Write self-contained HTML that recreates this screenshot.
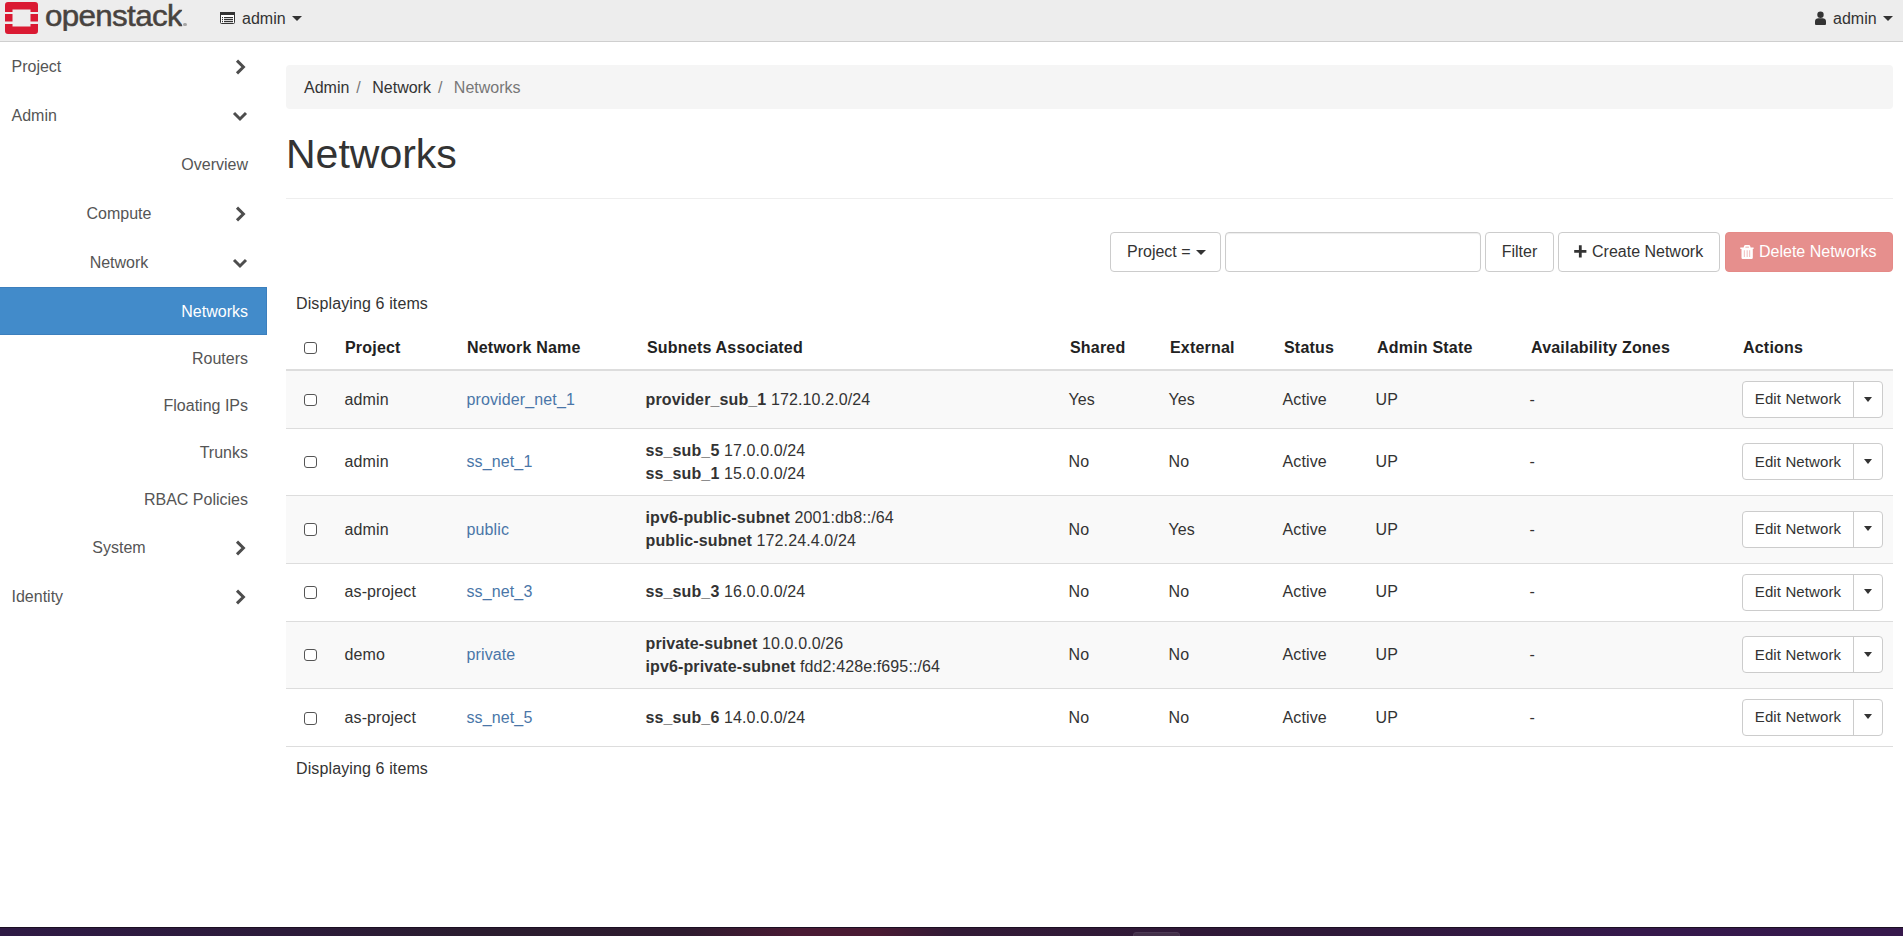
<!DOCTYPE html>
<html><head><meta charset="utf-8">
<style>
*{box-sizing:border-box;margin:0;padding:0}
html,body{width:1903px;height:936px;overflow:hidden;background:#fff}
body{font-family:"Liberation Sans",sans-serif;font-size:16px;color:#333;position:relative}
.abs{position:absolute}
/* navbar */
#nav{position:absolute;left:0;top:0;width:1903px;height:42px;background:#ededed;border-bottom:1px solid #cfcfcf}
#logo{position:absolute;left:5px;top:2px;width:33px;height:32px}
#wordmark{position:absolute;left:45px;top:0;height:31px;overflow:hidden;font-size:29px;font-weight:normal;-webkit-text-stroke:0.5px #48433f;color:#48433f;letter-spacing:-0.6px;line-height:42px;transform:scaleX(1.08);transform-origin:0 0}
#wordmark span{position:relative;top:-4.8px}
.navtxt{position:absolute;top:8px;line-height:22px;font-size:16px;color:#333}
.caret{position:absolute;width:0;height:0;border-left:5px solid transparent;border-right:5px solid transparent;border-top:5px solid #333}
/* sidebar */
.si{position:absolute;left:0;width:267px;height:48px;line-height:48px;color:#555;font-size:16px;white-space:nowrap}
.si.l1{padding-left:11.5px}
.si.r{text-align:right;padding-right:19px}
.si.c{text-align:center;padding-right:29px}
.si.active{background:#428bca;color:#fff;line-height:48px;border:1px solid #3c7fbd;border-left:none;padding-right:18px}
.chev{position:absolute}
/* breadcrumb */
#bc{position:absolute;left:286px;top:65px;width:1607px;height:44px;background:#f5f5f5;border-radius:4px;padding:1px 18px 0;line-height:44px;font-size:16px;color:#333;white-space:nowrap}
#bc .sep{color:#777;padding:0 7px}
#bc .cur{color:#777}
#h1{position:absolute;left:286px;top:129px;font-size:41px;line-height:50px;color:#333;font-weight:normal}
#hr{position:absolute;left:286px;top:198px;width:1607px;height:1px;background:#eee}
.btn{position:absolute;top:232px;height:40px;border:1px solid #ccc;border-radius:4px;background:#fff;color:#333;line-height:38px;font-size:16px;white-space:nowrap;text-align:center}
.disp{position:absolute;left:296px;font-size:16px;color:#333;line-height:22px;letter-spacing:0.12px}
/* table */
table{position:absolute;left:286px;top:326px;width:1607px;border-collapse:collapse;table-layout:fixed}
th{font-weight:bold;text-align:left;height:44px;letter-spacing:0.2px;color:#222;vertical-align:middle;border-bottom:2px solid #ddd;padding:2px 0 0 10px;line-height:22.86px}
td{vertical-align:middle;border-top:1px solid #ddd;padding:11px 0 9px 8.5px;letter-spacing:0.12px;line-height:22.86px;white-space:nowrap}
tr.odd td{background:#f9f9f9}
tbody td:nth-child(2),tbody td:nth-child(3){padding-left:9.5px}
tbody .cb{margin-left:9.5px}
tr.r4 td{padding-top:10px;padding-bottom:10px}
tr.r4 .cb,tr.r6 .cb{top:0}
tr.r4 .eb{top:0}
tr.r2 .eb .t,tr.r5 .eb .t{line-height:35px}
a{color:#4a76a8;text-decoration:none}
.cb{display:inline-block;width:12.5px;height:12.5px;border:1px solid #555;border-radius:3px;background:#fff;vertical-align:middle;margin-left:8px;position:relative;top:-1px}
.sub b{font-weight:bold}
.eb{display:inline-block;position:relative;top:-1px;left:0.5px;width:141px;height:37px;border:1px solid #ccc;border-radius:4px;background:#fff;vertical-align:middle}
.eb .t{position:absolute;left:0;top:0;width:111px;height:35px;line-height:33px;text-align:center;font-size:15px;color:#333;border-right:1px solid #ccc}
.eb .caret{left:121px;top:14.5px;border-left-width:4px;border-right-width:4px;border-top-width:5px}
#taskbar{position:absolute;left:0;top:927px;width:1903px;height:9px;background:linear-gradient(90deg,#2f1a45 0%,#2c1b3a 15%,#2a1c2f 25%,#2e1b2f 36%,#4a1a34 42%,#4a1a33 46%,#321a36 50%,#2f1939 70%,#35184b 86%,#36184c 100%);border-top:1px solid #1b0f22}
</style></head>
<body>
<div id="nav">
  <svg id="logo" viewBox="0 0 33 32">
    <path fill="#da1a32" d="M3 0H30A3 3 0 0 1 33 3V10H25.5V7.5H7.5V10H0V3A3 3 0 0 1 3 0Z"/>
    <path fill="#da1a32" d="M0 12H7.5V19.5H0ZM25.5 12H33V19.5H25.5Z"/>
    <path fill="#da1a32" d="M0 22H7.5V24.5H25.5V22H33V29A3 3 0 0 1 30 32H3A3 3 0 0 1 0 29Z"/>
  </svg>
  <div class="abs" style="left:183px;top:22.5px;width:3.6px;height:3.6px;border-radius:50%;background:#a5a5a5"></div><div id="wordmark"><span>openstack</span></div>
  <svg class="abs" style="left:220px;top:12px" width="15" height="12" viewBox="0 0 15 12">
    <rect x="0.5" y="0.5" width="14" height="11" rx="1" fill="#fff" stroke="#333"/>
    <rect x="0" y="0" width="15" height="3" fill="#333"/>
    <rect x="4" y="5" width="9" height="1.2" fill="#333"/><rect x="4" y="7" width="9" height="1.2" fill="#333"/><rect x="4" y="9" width="9" height="1.2" fill="#333"/>
    <rect x="2" y="5" width="1" height="1.2" fill="#333"/><rect x="2" y="7" width="1" height="1.2" fill="#333"/><rect x="2" y="9" width="1" height="1.2" fill="#333"/>
  </svg>
  <div class="navtxt" style="left:242px">admin</div>
  <div class="caret" style="left:292px;top:16px"></div>
  <svg class="abs" style="left:1815px;top:11px" width="11" height="14" viewBox="0 0 11 14">
    <circle cx="5.5" cy="3.8" r="3.2" fill="#333"/>
    <path d="M0 13V10.5C0 8.5 1.5 7.3 3.5 7.3H7.5C9.5 7.3 11 8.5 11 10.5V13A1 1 0 0 1 10 14H1A1 1 0 0 1 0 13Z" fill="#333"/>
  </svg>
  <div class="navtxt" style="left:1833px">admin</div>
  <div class="caret" style="left:1883px;top:16px"></div>
</div>

<!-- sidebar -->
<div class="si l1" style="top:42.5px">Project</div>
<div class="si l1" style="top:91.5px">Admin</div>
<div class="si r" style="top:140.5px">Overview</div>
<div class="si c" style="top:189.5px">Compute</div>
<div class="si c" style="top:238.5px">Network</div>
<div class="si r active" style="top:287px">Networks</div>
<div class="si r" style="top:334.5px">Routers</div>
<div class="si r" style="top:381.5px">Floating IPs</div>
<div class="si r" style="top:428.5px">Trunks</div>
<div class="si r" style="top:475.5px">RBAC Policies</div>
<div class="si c" style="top:523.5px">System</div>
<div class="si l1" style="top:572.5px">Identity</div>
<svg class="chev" style="left:233px;top:59px" width="14" height="16" viewBox="0 0 14 16"><path d="M4 1.6L10.4 8L4 14.4" fill="none" stroke="#4d4d4d" stroke-width="3"/></svg>
<svg class="chev" style="left:231.5px;top:108.5px" width="16" height="14" viewBox="0 0 16 14"><path d="M2 4L8 10L14 4" fill="none" stroke="#4d4d4d" stroke-width="3"/></svg>
<svg class="chev" style="left:233px;top:206px" width="14" height="16" viewBox="0 0 14 16"><path d="M4 1.6L10.4 8L4 14.4" fill="none" stroke="#4d4d4d" stroke-width="3"/></svg>
<svg class="chev" style="left:231.5px;top:255.5px" width="16" height="14" viewBox="0 0 16 14"><path d="M2 4L8 10L14 4" fill="none" stroke="#4d4d4d" stroke-width="3"/></svg>
<svg class="chev" style="left:233px;top:540px" width="14" height="16" viewBox="0 0 14 16"><path d="M4 1.6L10.4 8L4 14.4" fill="none" stroke="#4d4d4d" stroke-width="3"/></svg>
<svg class="chev" style="left:233px;top:589px" width="14" height="16" viewBox="0 0 14 16"><path d="M4 1.6L10.4 8L4 14.4" fill="none" stroke="#4d4d4d" stroke-width="3"/></svg>

<div id="bc">Admin<span class="sep">/&nbsp;</span>Network<span class="sep">/&nbsp;</span><span class="cur">Networks</span></div>
<h1 id="h1">Networks</h1>
<div id="hr"></div>

<div class="btn" style="left:1110px;width:111px;padding-left:16px;text-align:left">Project =<span class="caret" style="left:85px;top:17px"></span></div>
<div class="btn" style="left:1225px;width:256px;box-shadow:inset 0 1px 1px rgba(0,0,0,.075)"></div>
<div class="btn" style="left:1485px;width:69px">Filter</div>
<div class="btn" style="left:1558px;width:162px"><svg style="position:absolute;left:15px;top:12px" width="13" height="13" viewBox="0 0 13 13"><path fill="#333" d="M4.9 0.3H7.7V5H12.4V7.8H7.7V12.6H4.9V7.8H0.2V5H4.9Z"/></svg><span style="position:absolute;left:33px;top:0">Create Network</span></div>
<div class="btn" style="left:1725px;width:168px;background:#e68f8d;border-color:#e58a87;color:#fff"><svg style="position:absolute;left:14px;top:10.5px" width="14" height="16" viewBox="0 0 14 16"><path fill="#fff" fill-rule="evenodd" d="M3.6 3.6L4 2.2Q4.3 1 5.5 1H8.8Q10 1 10.3 2.2L10.6 3.6H13.6V5H0.3V3.6ZM5.3 3.6H9L8.8 2.7H5.5Z"/><path fill="#fff" d="M1.5 5H12.8V13.8Q12.8 15 11.6 15H2.7Q1.5 15 1.5 13.8ZM3.9 6.2V13H4.5V6.2ZM6.8 6.2V13H7.4V6.2ZM9.5 6.2V13H10.1V6.2Z" fill-rule="evenodd"/></svg><span style="position:absolute;left:33px;top:0">Delete Networks</span></div>

<div class="disp" style="top:293px">Displaying 6 items</div>

<table>
<colgroup><col style="width:49px"><col style="width:122px"><col style="width:180px"><col style="width:423px"><col style="width:100px"><col style="width:114px"><col style="width:93px"><col style="width:154px"><col style="width:212px"><col style="width:160px"></colgroup>
<thead><tr><th><span class="cb"></span></th><th>Project</th><th>Network Name</th><th>Subnets Associated</th><th>Shared</th><th>External</th><th>Status</th><th>Admin State</th><th>Availability Zones</th><th>Actions</th></tr></thead>
<tbody>
<tr class="odd"><td><span class="cb"></span></td><td>admin</td><td><a>provider_net_1</a></td><td><b>provider_sub_1</b> 172.10.2.0/24</td><td>Yes</td><td>Yes</td><td>Active</td><td>UP</td><td>-</td><td><span class="eb"><span class="t">Edit Network</span><span class="caret"></span></span></td></tr>
<tr class="r2"><td><span class="cb"></span></td><td>admin</td><td><a>ss_net_1</a></td><td><b>ss_sub_5</b> 17.0.0.0/24<br><b>ss_sub_1</b> 15.0.0.0/24</td><td>No</td><td>No</td><td>Active</td><td>UP</td><td>-</td><td><span class="eb"><span class="t">Edit Network</span><span class="caret"></span></span></td></tr>
<tr class="odd" style="height:68px"><td><span class="cb"></span></td><td>admin</td><td><a>public</a></td><td><b>ipv6-public-subnet</b> 2001:db8::/64<br><b>public-subnet</b> 172.24.4.0/24</td><td>No</td><td>Yes</td><td>Active</td><td>UP</td><td>-</td><td><span class="eb"><span class="t">Edit Network</span><span class="caret"></span></span></td></tr>
<tr class="r4"><td><span class="cb"></span></td><td>as-project</td><td><a>ss_net_3</a></td><td><b>ss_sub_3</b> 16.0.0.0/24</td><td>No</td><td>No</td><td>Active</td><td>UP</td><td>-</td><td><span class="eb"><span class="t">Edit Network</span><span class="caret"></span></span></td></tr>
<tr class="odd r5" style="height:67px"><td><span class="cb"></span></td><td>demo</td><td><a>private</a></td><td><b>private-subnet</b> 10.0.0.0/26<br><b>ipv6-private-subnet</b> fdd2:428e:f695::/64</td><td>No</td><td>No</td><td>Active</td><td>UP</td><td>-</td><td><span class="eb"><span class="t">Edit Network</span><span class="caret"></span></span></td></tr>
<tr class="r6"><td><span class="cb"></span></td><td>as-project</td><td><a>ss_net_5</a></td><td><b>ss_sub_6</b> 14.0.0.0/24</td><td>No</td><td>No</td><td>Active</td><td>UP</td><td>-</td><td><span class="eb"><span class="t">Edit Network</span><span class="caret"></span></span></td></tr>
</tbody>
<tfoot><tr><td colspan="10" style="border-top:1px solid #ddd;padding:11px 0 0 10px;line-height:22px">Displaying 6 items</td></tr></tfoot>
</table>

<div id="taskbar"><div style="position:absolute;left:1133px;top:4px;width:47px;height:8px;border-radius:3px;background:#433049;border:1px solid #4d3a55"></div></div>
</body></html>
